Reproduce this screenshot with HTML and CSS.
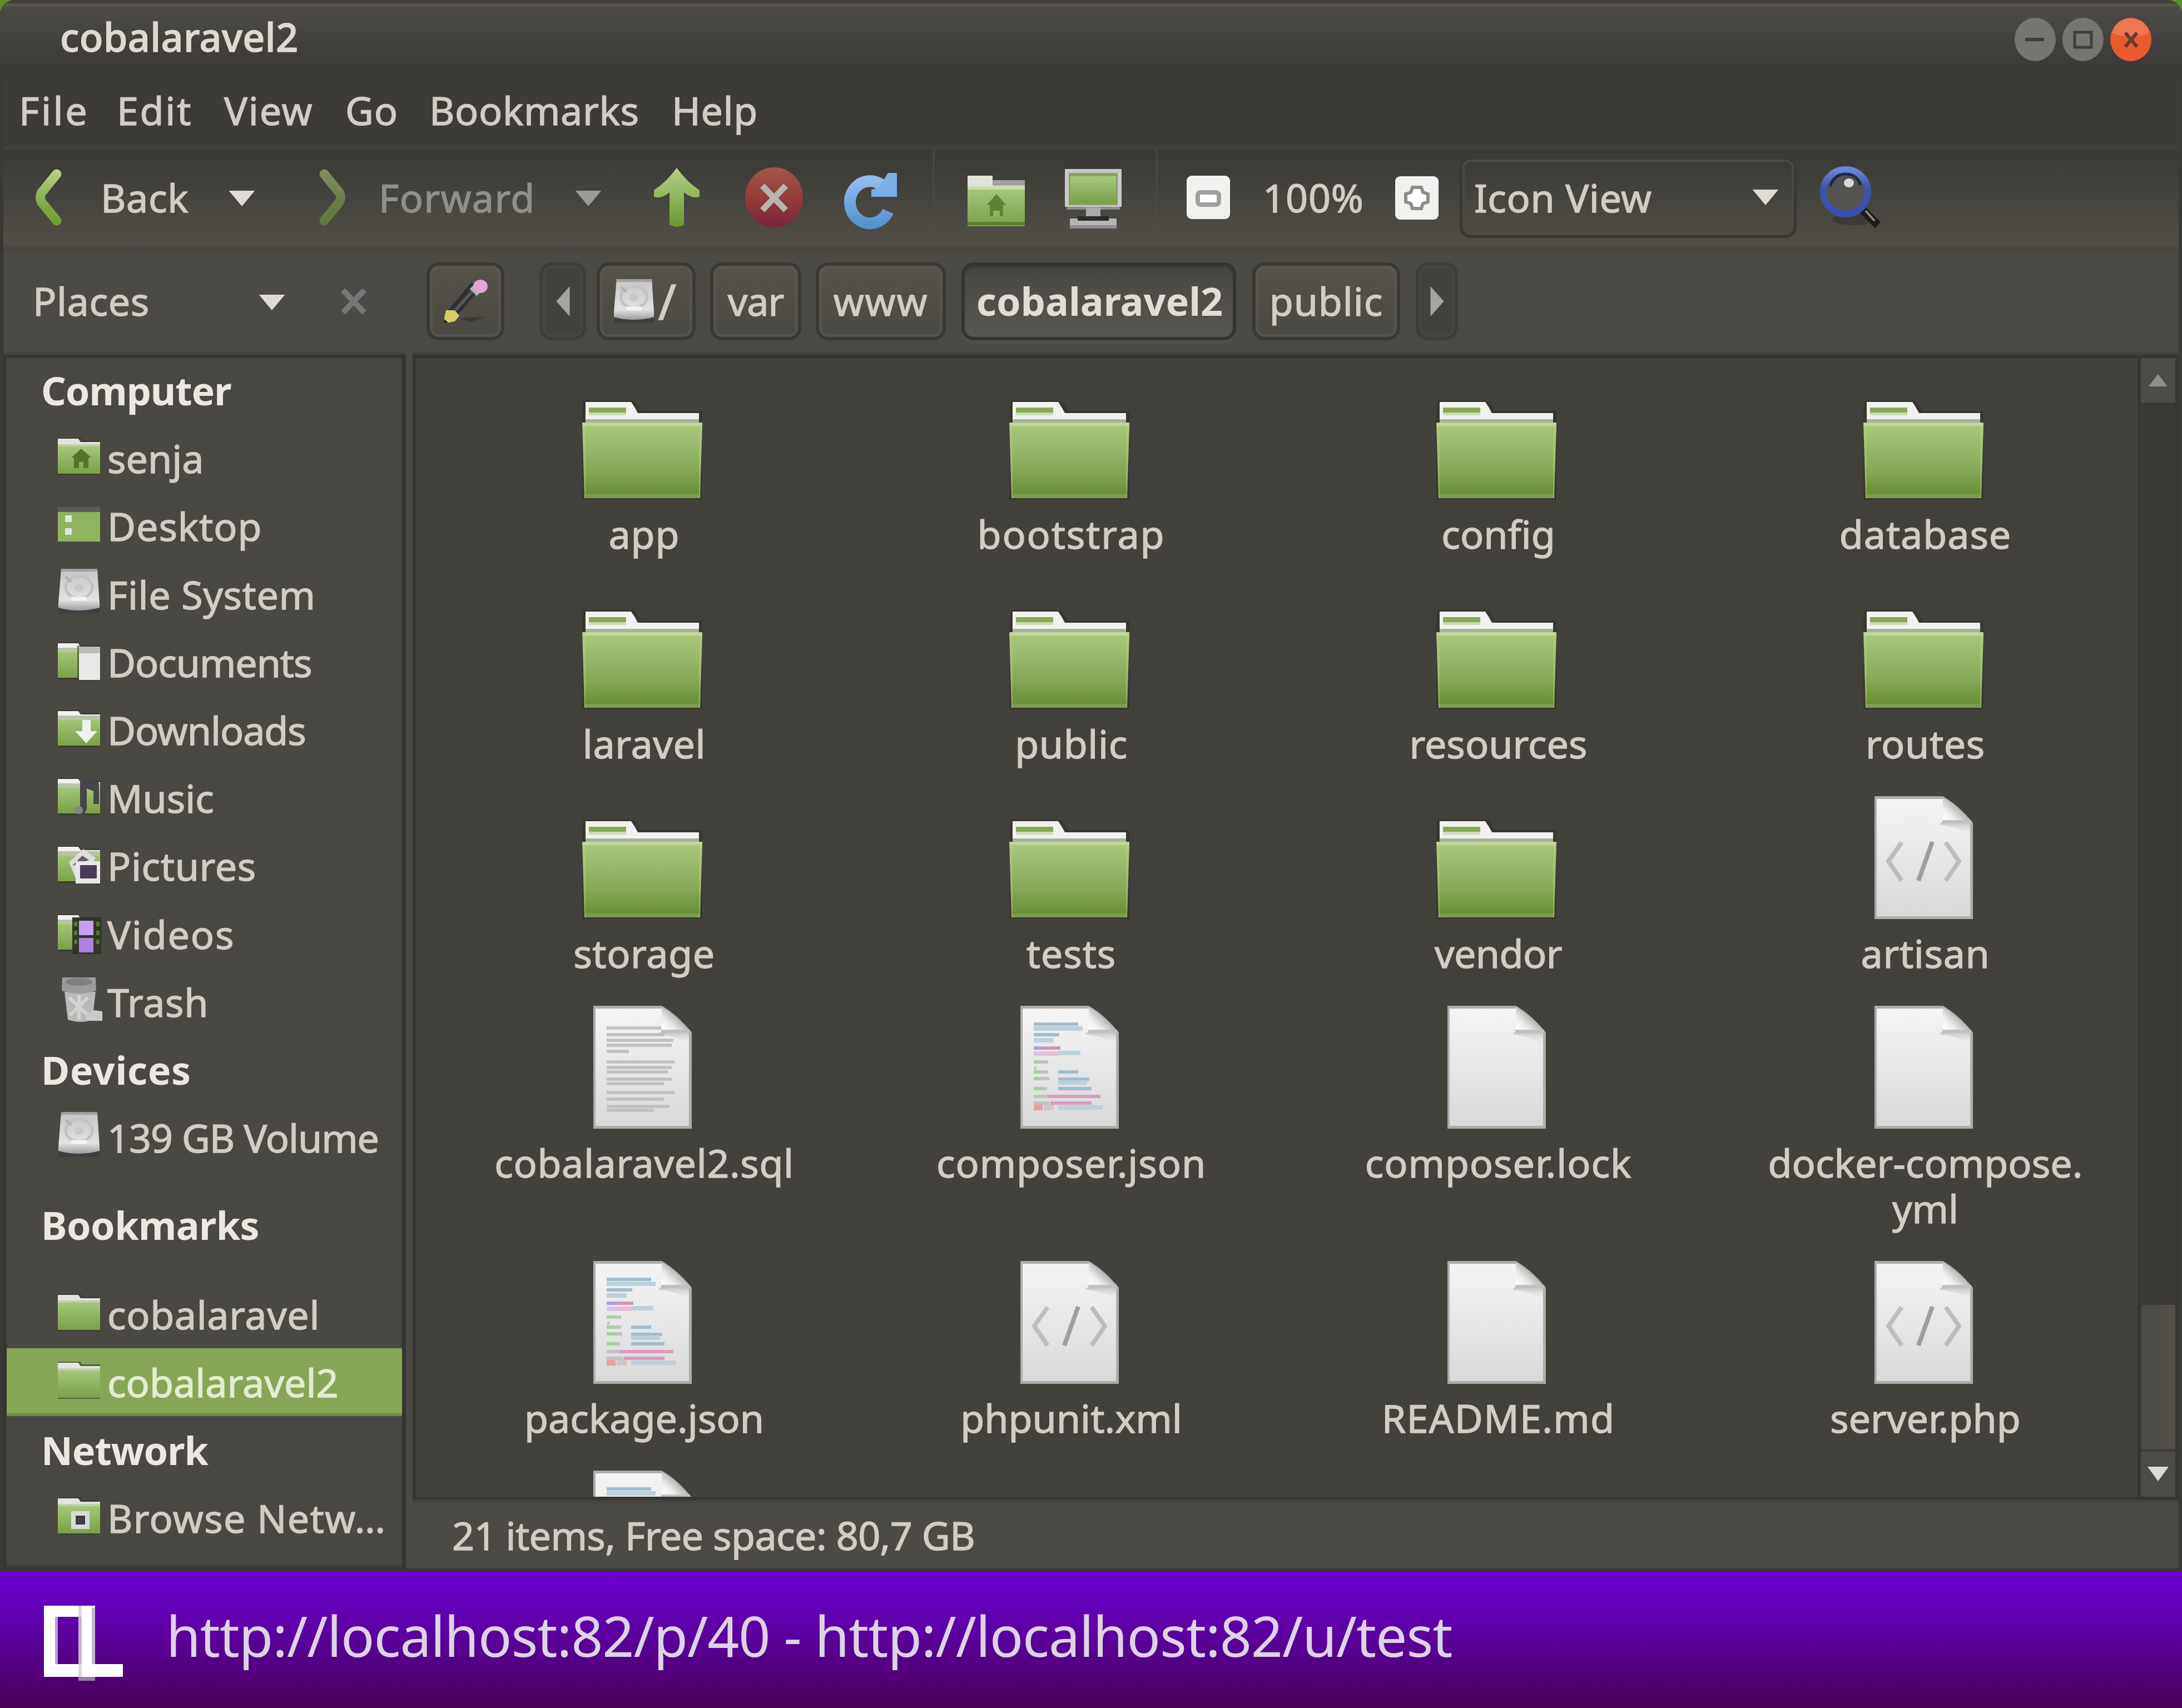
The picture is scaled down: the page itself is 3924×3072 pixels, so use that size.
FILE: index.html
```html
<!DOCTYPE html>
<html lang="en">
<head>
<meta charset="utf-8">
<title>cobalaravel2</title>
<link rel="stylesheet" href="styles.css">
</head>
<body>
<svg class="defs" width="0" height="0" aria-hidden="true">
  <defs>
    <linearGradient id="gFolder" x1="0" y1="0" x2="0" y2="1"><stop offset="0" stop-color="#abc97e"/><stop offset=".6" stop-color="#89aa5a"/><stop offset=".93" stop-color="#6c9037"/><stop offset="1" stop-color="#6c9037"/></linearGradient>
    <linearGradient id="gSmall" x1="0" y1="0" x2="0" y2="1"><stop offset="0" stop-color="#a8c97c"/><stop offset="1" stop-color="#7ba04a"/></linearGradient>
    <linearGradient id="gDoc" x1="0" y1="0" x2="0" y2="1"><stop offset="0" stop-color="#f4f4f4"/><stop offset="1" stop-color="#d9d9d9"/></linearGradient>
    <linearGradient id="gFold" gradientUnits="userSpaceOnUse" x1="124" y1="44" x2="148" y2="20"><stop offset="0" stop-color="#ffffff"/><stop offset=".5" stop-color="#ececec"/><stop offset="1" stop-color="#b9b9b9"/></linearGradient>
    <linearGradient id="gShade" x1="0" y1="0" x2="0" y2="1"><stop offset="0" stop-color="#c6c6c6"/><stop offset="1" stop-color="#e8e8e8" stop-opacity="0"/></linearGradient>
    <linearGradient id="gArrow" x1="0" y1="0" x2="0" y2="1"><stop offset="0" stop-color="#b4cf86"/><stop offset=".5" stop-color="#8fb65b"/><stop offset="1" stop-color="#6b9433"/></linearGradient>
    <linearGradient id="gChev" gradientUnits="userSpaceOnUse" x1="0" y1="0" x2="0" y2="100"><stop offset="0" stop-color="#bccf8a"/><stop offset=".6" stop-color="#82ab4a"/><stop offset="1" stop-color="#6f9d33"/></linearGradient>
    <linearGradient id="gStop" x1="0" y1="0" x2="0" y2="1"><stop offset="0" stop-color="#a0564b"/><stop offset=".5" stop-color="#953c39"/><stop offset="1" stop-color="#7b2440"/></linearGradient>
    <linearGradient id="gBlue" x1="0" y1="0" x2="0" y2="1"><stop offset="0" stop-color="#8fbcec"/><stop offset="1" stop-color="#5793d0"/></linearGradient>
    <linearGradient id="gDrive" x1="0" y1="0" x2="0" y2="1"><stop offset="0" stop-color="#c4c4c4"/><stop offset=".75" stop-color="#e2e2e2"/><stop offset="1" stop-color="#9b9b9b"/></linearGradient>
    <linearGradient id="gLens" x1="0" y1="0" x2="0" y2="1"><stop offset="0" stop-color="#6d85d6"/><stop offset=".4" stop-color="#3d55a8"/><stop offset="1" stop-color="#3a4fae"/></linearGradient>

    <symbol id="folder" viewBox="0 0 216 221">
      <path d="M2 42H93l14 19h109v164H0V60z" fill="#35332e" opacity=".7"/>
      <path d="M6 45H88l6 9 6 11h110v30H6z" fill="#f1f1ef"/>
      <path d="M12 55h67v13H12z" fill="#87a857"/><path d="M12 64h67v5H12z" fill="#cdd9b8"/>
      <path d="M6 76h204v6H6z" fill="#a9b29b"/>
      <path d="M0 82h216v7l-4 129H4z" fill="url(#gFolder)"/>
      <path d="M1 82h214v6H1z" fill="#c0d69c"/><path d="M4 211h208v7H4z" fill="#7c9b55"/>
      <path d="M1 88h5v130H4zM210 88h5l-3 130h-2z" fill="#b8d28c" opacity=".4"/>
    </symbol>
    <symbol id="doc" viewBox="0 0 177 221">
      <path d="M0 0h123q28 16 54 48v173H0z" fill="#adadab"/>
      <path d="M4 5h119l49 45v166H4z" fill="url(#gDoc)"/>
      <path d="M118 48h54v22q-22-16-54-18z" fill="url(#gShade)"/>
      <path d="M123 2q26 16 49 42h-49z" fill="url(#gFold)"/>
      <path d="M122 43h52v6h-52z" fill="#c0c0c0"/>
    </symbol>
    <symbol id="sheet" viewBox="0 0 177 221">
      <use href="#doc"/>
      <path d="M24 40h98M24 52h104M24 62h120M24 71h117M24 82h40M24 101h122M24 111h117M24 119h110M24 132h117M24 140h103M24 156h122M24 168h103M24 181h113M24 188h85" stroke="#c0c0c0" stroke-width="5.5"/>
    </symbol>
    <symbol id="code" viewBox="0 0 177 221">
      <use href="#doc"/>
      <g stroke-width="6" fill="none">
        <path d="M24 33h80M24 52h46M68 119h36M68 132h56M68 149h60" stroke="#9fbed0"/>
        <path d="M24 41h88M24 62h36M68 85h40M68 138h52M68 183h80" stroke="#bdd0dc" stroke-width="8"/>
        <path d="M24 76h20" stroke="#b59bdb"/><path d="M44 76h28" stroke="#d695b8"/>
        <path d="M24 86h18" stroke="#d8c6e8" stroke-width="8"/><path d="M42 86h26" stroke="#e6bfd2" stroke-width="8"/>
        <path d="M24 101h14M24 119h14M24 131h14M24 149h14" stroke="#9fd596"/>
        <path d="M38 101h12M25 112h4M38 119h12M38 131h14M38 149h10M24 163h24M24 175h28" stroke="#c2c2c2"/>
        <path d="M48 163h96M54 175h74" stroke="#dc9cbf"/>
        <path d="M24 183h16" stroke="#e8a2a0" stroke-width="10"/><path d="M42 183h18" stroke="#cfc7c5" stroke-width="10"/>
      </g>
    </symbol>
    <symbol id="markup" viewBox="0 0 177 221">
      <use href="#doc"/>
      <path d="M49 83L25 117l24 35M128 83l24 34-24 35" stroke="#bdbdbd" stroke-width="8" fill="none" stroke-linejoin="round"/>
      <path d="M104 82L79 152" stroke="#9e9e9e" stroke-width="8"/>
    </symbol>
    <symbol id="mini" viewBox="0 0 76 76">
      <path d="M0 1h40l4 5h34v62H-1z" fill="#35362c" opacity=".6"/>
      <path d="M0 3h37l4 6h35v14H0z" fill="#e3e3e2"/>
      <path d="M0 13h76v53H0z" fill="url(#gSmall)"/><path d="M0 13h76v4H0z" fill="#bfcfa9"/>
    </symbol>
    <symbol id="miniWhite" viewBox="0 0 76 76">
      <path d="M0 2h38l4 5h35v62H-1z" fill="#35362c" opacity=".6"/>
      <path d="M0 4h37l4 6h35v14H0z" fill="#f1f1f0"/>
      <path d="M0 14h76v52H0z" fill="url(#gSmall)"/><path d="M0 12h76v8H0z" fill="#b9c3a9"/>
    </symbol>
    <symbol id="drive" viewBox="0 0 76 82">
      <path d="M1 69h74v12H1z" fill="#3f3f40"/>
      <path d="M6 0h65l4 62v8q-38 10-74 0v-8z" fill="url(#gDrive)"/>
      <path d="M6 0h65v5H6z" fill="#a0a0a0"/>
      <ellipse cx="38" cy="33" rx="24" ry="20" fill="none" stroke="#c3c3c3" stroke-width="5"/>
      <ellipse cx="38" cy="34" rx="9" ry="7" fill="#c9c9c9"/><path d="M14 14l10 10" stroke="#b3b3b3" stroke-width="5"/>
      <path d="M24 54h28" stroke="#f3f3f3" stroke-width="7"/>
    </symbol>
    <symbol id="down" viewBox="0 0 50 30"><path d="M0 0h50L25 30z" fill="currentColor"/></symbol>
  </defs>
</svg>

<main class="window">
  <header class="titlebar">
    <h1 class="title">cobalaravel2</h1>
    <div class="controls">
      <svg class="ctl" viewBox="0 0 76 80"><ellipse cx="38" cy="40" rx="37" ry="39" class="ctl-gray"/><path d="M20 40h34" stroke="#3f3e3a" stroke-width="6"/></svg>
      <svg class="ctl" viewBox="0 0 76 80"><ellipse cx="38" cy="40" rx="37" ry="39" class="ctl-gray"/><rect x="23" y="27" width="30" height="27" fill="none" stroke="#3f3e3a" stroke-width="5"/></svg>
      <svg class="ctl" viewBox="0 0 76 80"><ellipse cx="38" cy="40" rx="37" ry="39" fill="#e95b2f"/><path d="M4 28q10-26 34-26t34 26q-34 14-68 0z" fill="#f2886b" opacity=".6"/><path d="M28 28l21 25M49 28L28 53" stroke="#6b3a2a" stroke-width="6"/></svg>
    </div>
  </header>

  <nav class="menubar">
    <span class="m-file ls-4">File</span><span class="m-edit ls-3">Edit</span><span class="m-view ls-2">View</span><span class="m-go ls-1">Go</span><span class="m-book">Bookmarks</span><span class="m-help">Help</span>
  </nav>

  <div class="toolbar">
    <div class="group nav">
      <svg class="chev" viewBox="0 0 50 100"><path d="M41 8L14 41q-5 9 0 18l27 33" class="chev-line"/></svg>
      <span class="t-back">Back</span>
      <svg class="dd dd-back" viewBox="0 0 50 30"><use href="#down"/></svg>
      <svg class="chev chev-fwd" viewBox="0 0 50 100"><path d="M9 8l27 33q5 9 0 18L9 92" class="chev-line"/></svg>
      <span class="t-fwd ls-15">Forward</span>
      <svg class="dd dd-fwd" viewBox="0 0 50 30"><use href="#down"/></svg>
      <svg class="up" viewBox="0 0 86 110"><path d="M43 2Q62 28 84 42v12q-14 4-28-8v58q-13 8-26 0V46Q16 58 2 54V42Q24 28 43 2z" fill="url(#gArrow)"/></svg>
      <svg class="stop" viewBox="0 0 106 110"><ellipse cx="53" cy="55" rx="52" ry="54" fill="url(#gStop)"/><path d="M32 34l42 44M74 34L32 78" stroke="#b9b4b0" stroke-width="11"/></svg>
      <svg class="reload" viewBox="0 0 98 98"><path d="M74 28A36 38 0 1 0 80 70" fill="none" stroke="url(#gBlue)" stroke-width="21"/><path d="M96 1v43H50V31l14-4 16-26z" fill="#79aee6"/></svg>
    </div>
    <div class="group places-btns">
      <svg class="homef" viewBox="0 0 103 98"><path d="M0 5h45v12h58v14H0z" fill="#e0e3da"/><path d="M45 13h58v10H45z" fill="#a3a1a4"/><path d="M0 24h103v72H0z" fill="url(#gSmall)"/><path d="M0 24h103v6H0z" fill="#c9dbaf"/><path d="M0 88h103v6H0z" fill="#5d7d31"/><path d="M52 38l18 20h-6v20H40V58h-6z" fill="#5f8334"/><path d="M46 68h12v11H46z" fill="#8fb45f"/></svg>
      <svg class="comp" viewBox="0 0 104 112"><path d="M1 3h102v68H1z" fill="#c9c9c9"/><path d="M8 10h88v58H8z" fill="#87a25c"/><path d="M11 16h82v48H11z" fill="url(#gSmall)"/><path d="M4 71h96v5H4z" fill="#8b8b8d"/><path d="M39 72h26v24H39z" fill="#a9a9a9"/><path d="M10 92h84v18H10z" fill="#b5b5b5"/><path d="M24 88h56v8H24z" fill="#2b2a28"/><path d="M10 104h84v6H10z" fill="#8e8e8e"/></svg>
    </div>
    <div class="group zoom">
      <svg class="zbtn" viewBox="0 0 80 80"><rect x="1" y="1" width="78" height="78" rx="9" fill="#f1f1f0"/><rect x="21" y="31" width="38" height="22" rx="5" fill="#fff" stroke="#a0a09d" stroke-width="8"/></svg>
      <span class="t-zoom ls-1">100%</span>
      <svg class="zbtn zplus" viewBox="0 0 80 80"><rect x="1" y="1" width="78" height="78" rx="9" fill="#f1f1f0"/><path d="M32 21h16l3 9 9 3v14l-9 3-3 9H32l-3-9-9-3V33l9-3z" fill="#fff" stroke="#8d8d89" stroke-width="6"/></svg>
      <div class="combo"><span>Icon View</span><svg class="dd" viewBox="0 0 50 30"><use href="#down"/></svg></div>
      <svg class="lens" viewBox="0 0 108 112"><ellipse cx="60" cy="96" rx="38" ry="10" fill="#33322e" opacity=".6"/><path d="M74 76L104 106" stroke="#1d1c1a" stroke-width="15"/><path d="M82 80l16 18" stroke="#8b8783" stroke-width="4"/><circle cx="46" cy="46" r="40" fill="#5b5a55" fill-opacity=".75" stroke="url(#gLens)" stroke-width="12"/><path d="M18 36Q26 14 46 14t27 20" stroke="#20284e" stroke-width="5" fill="none"/><ellipse cx="52" cy="30" rx="9" ry="8" fill="#d8d8d6"/></svg>
    </div>
  </div>

  <div class="locbar">
    <div class="places-head">
      <span>Places</span>
      <svg class="dd" viewBox="0 0 50 30"><use href="#down"/></svg>
      <svg class="x" viewBox="0 0 52 54"><path d="M7 7l38 40M45 7L7 47" stroke="#77767a" stroke-width="10"/></svg>
    </div>
    <div class="path">
      <div class="btn b-edit"><svg viewBox="0 0 80 80"><path d="M30 70l44-2-26 10z" fill="#3c3a35"/><path d="M16 62L58 12" stroke="#303030" stroke-width="19"/><path d="M22 56L54 20" stroke="#56565a" stroke-width="6"/><path d="M54 24l8-8" stroke="#b3b0b4" stroke-width="18"/><ellipse cx="67" cy="13" rx="13" ry="12" fill="#e3a5da"/><path d="M0 80L5 56h16l8 10-8 10z" fill="#d8cc68"/><path d="M0 80l2-8 7 6z" fill="#28241a"/></svg></div>
      <div class="btn flat b-left"><svg viewBox="0 0 24 54"><path d="M24 0v54L0 27z" fill="#a5a4a2"/></svg></div>
      <div class="btn b-root"><svg viewBox="0 0 76 82"><use href="#drive"/></svg><span>/</span></div>
      <div class="btn b-var ls-n1"><span>var</span></div>
      <div class="btn b-www ls-2"><span>www</span></div>
      <div class="btn b-cur"><span>cobalaravel2</span></div>
      <div class="btn b-public ls-1"><span>public</span></div>
      <div class="btn flat b-right"><svg viewBox="0 0 24 54"><path d="M0 0v54l24-27z" fill="#a5a4a2"/></svg></div>
    </div>
  </div>

  <div class="body">
    <aside class="sidebar">
      <h2 class="ls-n1">Computer</h2>
      <div class="row"><svg viewBox="0 0 76 76"><use href="#mini"/><path d="M42 21l18 16h-5v19h-9V45h-8v11h-9V37h-5z" fill="#54742c"/></svg><span class="ls-0">senja</span></div>
      <div class="row"><svg viewBox="0 0 76 76"><path d="M0 4h76v10H0z" fill="#5c5c55"/><path d="M0 13h76v53H0z" fill="#8fb35f"/><path d="M13 19h12v12H13zM13 42h12v12H13z" fill="#e2e7da"/></svg><span class="ls-1">Desktop</span></div>
      <div class="row"><svg class="disk" viewBox="0 0 76 82"><use href="#drive"/></svg><span>File System</span></div>
      <div class="row"><svg viewBox="0 0 76 76"><use href="#miniWhite"/><path d="M35 8h42v64H35z" fill="#35362c" opacity=".6"/><path d="M38 10h38v60H38z" fill="#e8e8e7"/><path d="M38 10h38v12H38z" fill="#bcbdb6"/></svg><span class="ls-n1">Documents</span></div>
      <div class="row"><svg viewBox="0 0 76 76"><use href="#miniWhite"/><path d="M44 20h15v20h12L51 62 31 40h13z" fill="#f0f0ee"/></svg><span class="ls-n1">Downloads</span></div>
      <div class="row"><svg viewBox="0 0 76 76"><use href="#miniWhite"/><path d="M40 3h12l22 8v38h-10V26l-12-5v37q-4 14-16 12-8-8 4-16z" fill="#45464a"/><circle cx="38" cy="60" r="7" fill="#85858a"/></svg><span class="ls-0">Music</span></div>
      <div class="row"><svg viewBox="0 0 76 76"><use href="#miniWhite"/><path d="M20 32L46 8l22 16-16 30-20 6z" fill="#dedddb"/><path d="M26 38l18-18 12 8z" fill="#6a5a70"/><path d="M32 30h44v40H32z" fill="#e9e8e8"/><path d="M40 37h30v24H40z" fill="#4b3a55"/></svg><span>Pictures</span></div>
      <div class="row"><svg viewBox="0 0 76 76"><use href="#miniWhite"/><path d="M26 8h52v66H26z" fill="#303728"/><path d="M38 14h26v26H38z" fill="#c6a0f0"/><path d="M38 45h26v26H38z" fill="#af80dd"/><path d="M29 16h6v8h-6zm0 16h6v8h-6zm0 16h6v8h-6zM69 16h6v8h-6zm0 16h6v8h-6zm0 16h6v8h-6z" fill="#567a31"/></svg><span class="ls-2">Videos</span></div>
      <div class="row"><svg viewBox="0 0 76 76"><path d="M12 20h56l-6 50q-20 8-44 0z" fill="#b9bab9"/><path d="M20 30l34 32M54 30L22 62M38 26v44" stroke="#d3d3d2" stroke-width="6"/><path d="M8 -6h60l1 24q-30 10-62 0z" fill="#9a9b9d"/><ellipse cx="38" cy="2" rx="24" ry="7" fill="#7f8082"/><path d="M50 62l14-9 16 2v17H52z" fill="#c9cac8"/></svg><span>Trash</span></div>
      <h2>Devices</h2>
      <div class="row"><svg class="disk" viewBox="0 0 76 82"><use href="#drive"/></svg><span class="ls-n1">139 GB Volume</span></div>
      <h2 class="h-book ls-n0">Bookmarks</h2>
      <div class="row"><svg viewBox="0 0 76 76"><use href="#mini"/></svg><span>cobalaravel</span></div>
      <div class="row selected"><svg viewBox="0 0 76 76"><use href="#mini"/></svg><span class="ls-0">cobalaravel2</span></div>
      <h2 class="ls-n1">Network</h2>
      <div class="row"><svg viewBox="0 0 76 76"><use href="#mini"/><path d="M24 26h33v32H24z" fill="#d8dcd4"/><path d="M32 34h17v16H32z" fill="#3e4143"/></svg><span class="ls-15">Browse Netw…</span></div>
    </aside>

    <section class="content">
      <div class="view">
        <div class="files">
          <div class="file"><svg class="fold"><use href="#folder"/></svg><span class="ls-1">app</span></div>
          <div class="file"><svg class="fold"><use href="#folder"/></svg><span class="ls-2">bootstrap</span></div>
          <div class="file"><svg class="fold"><use href="#folder"/></svg><span class="ls-0">config</span></div>
          <div class="file"><svg class="fold"><use href="#folder"/></svg><span class="ls-1">database</span></div>
          <div class="file"><svg class="fold"><use href="#folder"/></svg><span>laravel</span></div>
          <div class="file"><svg class="fold"><use href="#folder"/></svg><span>public</span></div>
          <div class="file"><svg class="fold"><use href="#folder"/></svg><span class="ls-0">resources</span></div>
          <div class="file"><svg class="fold"><use href="#folder"/></svg><span>routes</span></div>
          <div class="file"><svg class="fold"><use href="#folder"/></svg><span>storage</span></div>
          <div class="file"><svg class="fold"><use href="#folder"/></svg><span class="ls-1">tests</span></div>
          <div class="file"><svg class="fold"><use href="#folder"/></svg><span class="ls-n0">vendor</span></div>
          <div class="file"><svg><use href="#markup"/></svg><span>artisan</span></div>
          <div class="file"><svg><use href="#sheet"/></svg><span>cobalaravel2.sql</span></div>
          <div class="file"><svg><use href="#code"/></svg><span class="ls-1">composer.json</span></div>
          <div class="file"><svg><use href="#doc"/></svg><span class="ls-1">composer.lock</span></div>
          <div class="file"><svg><use href="#doc"/></svg><span class="ls-0">docker-compose.<br>yml</span></div>
          <div class="file"><svg><use href="#code"/></svg><span class="ls-0">package.json</span></div>
          <div class="file"><svg><use href="#markup"/></svg><span class="ls-0">phpunit.xml</span></div>
          <div class="file"><svg><use href="#doc"/></svg><span class="ls-15">README.md</span></div>
          <div class="file"><svg><use href="#markup"/></svg><span class="ls-0">server.php</span></div>
          <div class="file"><svg><use href="#code"/></svg></div>
        </div>
        <div class="scrollbar">
          <div class="sb-up"><svg viewBox="0 0 34 22"><path d="M0 22h34L17 0z" fill="#8f8e8b"/></svg></div>
          <div class="sb-track"><div class="sb-thumb"></div></div>
          <div class="sb-down"><svg viewBox="0 0 38 26"><path d="M0 0h38L19 26z" fill="#dddcd9"/></svg></div>
        </div>
      </div>
      <footer class="status ls-n0">21 items, Free space: 80,7 GB</footer>
    </section>
  </div>
</main>

<footer class="caption">
  <svg class="logo" viewBox="0 0 142 136"><path d="M0 0h92v20H20v85h42V20h30v85h50v23H0z" fill="#fff"/><path d="M62 20h6v85h-6zM86 4h6v101h-6z" fill="#c3b6d2"/><path d="M20 20h5v85h-5z" fill="#b9a3cf"/><path d="M62 0h6v20h-6zM62 105h6v23h-6z" fill="#dcd6e4"/><path d="M62 128h30v7H62z" fill="#9580a6"/></svg>
  <span>http://localhost:82/p/40 - http://localhost:82/u/test</span>
</footer>
</body>
</html>
```
FILE: styles.css
```css
* { box-sizing: border-box; }
body {
  margin: 0;
  width: 3924px;
  height: 3072px;
  overflow: hidden;
  background: #5f8f2d;
  color: #d1cdc5;
  font: 400 70px/82px "Noto Sans", "Open Sans", sans-serif;
  letter-spacing: 0.6px;
  white-space: nowrap;
}
svg { display: block; flex: none; overflow: visible; }
.defs { position: absolute; }
h1, h2 { margin: 0; font-size: inherit; }

.ls-n1 { letter-spacing: -1.1px; }
.ls-n0 { letter-spacing: -0.6px; }
.ls-0 { letter-spacing: 0; }
.ls-1 { letter-spacing: 0.9px; }
.ls-15 { letter-spacing: 1.3px; }
.ls-2 { letter-spacing: 1.8px; }
.ls-3 { letter-spacing: 2.7px; }
.ls-4 { letter-spacing: 3.6px; }

.window {
  height: 2827px;
  display: flex;
  flex-direction: column;
  padding: 0 6px 6px;
  background: #3a3935;
  border-radius: 26px 26px 0 0;
  overflow: hidden;
  -webkit-text-stroke: 1.3px currentColor;
}

.titlebar {
  height: 132px;
  margin: 0 -6px;
  padding: 0 54px 0 108px;
  display: flex;
  justify-content: space-between;
  align-items: center;
  background: linear-gradient(#42413c 0 6px, #58554d 6px 12px, #4c4b46 12px, #3c3b37 112px);
}
.title { font-weight: 500; color: #dfdad0; letter-spacing: 0.4px; }
.controls { display: flex; gap: 10px; padding-top: 9px; }
.ctl { width: 76px; height: 80px; }
.ctl-gray { fill: #76756f; }

.menubar {
  height: 137px;
  display: flex;
  align-items: center;
  background: #3c3b37;
  border-bottom: 5px solid #403f3a;
}
.menubar span { flex: none; }
.m-file { width: 176px; margin-left: 28px; }
.m-edit { width: 193px; }
.m-view { width: 218px; }
.m-go { width: 151px; }
.m-book { width: 436px; }

.toolbar {
  height: 172px;
  display: flex;
  background: linear-gradient(#393834, #45443e 50%, #524f47);
}
.group { display: flex; align-items: center; }
.nav { width: 1671px; }
.places-btns { width: 401px; border-left: 4px solid rgba(80, 78, 70, .55); }
.zoom { border-left: 4px solid rgba(80, 78, 70, .55); }
.chev { width: 50px; height: 100px; margin-left: 55px; }
.chev-line { fill: none; stroke: url(#gChev); stroke-width: 17; stroke-linecap: round; }
.chev-fwd { margin-left: 114px; opacity: .55; }
.t-back { margin-left: 70px; width: 164px; }
.dd { width: 50px; height: 28px; color: #dedbd4; }
.dd-back { margin-left: 65px; }
.t-fwd { margin-left: 57px; width: 285px; color: #918f8a; }
.dd-fwd { margin-left: 67px; color: #9d9b98; }
.dd-fwd, .dd-back { margin-top: 4px; }
.up { width: 86px; height: 110px; margin-left: 91px; }
.stop { width: 106px; height: 110px; margin-left: 79px; }
.reload { width: 98px; height: 98px; margin-left: 72px; margin-top: 8px; }
.homef { width: 103px; height: 98px; margin-left: 59px; margin-top: 10px; }
.comp { width: 104px; height: 112px; margin-left: 71px; margin-top: 4px; }
.zbtn { width: 80px; height: 80px; margin-left: 51px; }
.t-zoom { margin-left: 58px; width: 176px; }
.zplus { margin-left: 61px; margin-top: 1px; }
.combo {
  width: 606px;
  height: 146px;
  margin-left: 37px;
  padding: 0 26px 0 21px;
  display: flex;
  align-items: center;
  justify-content: space-between;
  border: 5px solid #3a3934;
  border-radius: 20px;
  box-shadow: inset 0 0 0 4px #4b4a44;
}
.lens { width: 108px; height: 112px; margin-left: 42px; }

.locbar {
  height: 191px;
  display: flex;
  align-items: center;
  padding-top: 5px;
  background: #4c4a44;
  border-top: 6px solid #4a4943;
  box-shadow: inset 0 6px #474640;
}
.places-head { width: 761px; display: flex; align-items: center; padding-left: 53px; }
.places-head span { width: 405px; margin-top: -2px; }
.places-head .dd { margin-top: 4px; }
.x { width: 52px; height: 54px; margin-left: 96px; }
.path { display: flex; }
.btn {
  height: 140px;
  display: flex;
  align-items: center;
  justify-content: center;
  border: 6px solid #3b3a35;
  border-radius: 22px;
  background: linear-gradient(#555249, #4a4943);
  box-shadow: inset 0 0 0 5px rgba(92, 91, 83, .55);
}
.btn span { margin-top: -3px; }
.flat { background: #43423e; border-color: #3f3e3a; box-shadow: inset 0 0 0 4px #484743; }
.flat svg { width: 25px; height: 54px; }
.b-edit { width: 140px; }
.b-edit svg { width: 80px; height: 80px; }
.b-left { width: 84px; margin-left: 63px; }
.b-root { width: 178px; margin-left: 19px; gap: 5px; }
.b-root svg { width: 78px; height: 80px; }
.b-root span { width: 40px; font-size: 88px; }
.b-var { width: 164px; margin-left: 26px; }
.b-www { width: 234px; margin-left: 26px; }
.b-cur {
  width: 494px;
  margin-left: 28px;
  font-weight: 700;
  letter-spacing: 0;
  color: #e2ddd4;
  -webkit-text-stroke: 0;
  background: linear-gradient(#46453f, #4b4a45 20%, #575650);
  border-color: #363530;
  box-shadow: 0 6px #504f49, inset 0 5px #3f3e39;
}
.b-cur span { padding-left: 3px; }
.b-public { width: 266px; margin-left: 29px; }
.b-right { width: 76px; margin-left: 28px; }

.body { flex: 1; min-height: 0; display: flex; background: #4c4a44; }
.sidebar {
  width: 724px;
  padding: 3px 7px 0 6px;
  background: #4a4842;
  border-top: 6px solid #45433e;
  box-shadow: inset 6px 6px #363531, inset -7px 0 #363531, inset 0 -6px #3e3d38;
}
.sidebar h2 { height: 122.2px; line-height: 122.2px; padding-left: 62px; font-weight: 700; color: #ebe8e2; -webkit-text-stroke: 0; }
.row { height: 122.2px; padding-left: 92px; display: flex; align-items: center; gap: 13px; }
.row svg { width: 76px; height: 76px; }
.row .disk { height: 82px; margin-top: -10px; }
.sidebar .h-book { margin: 35px 0 38px; }
.selected { background: #86a655; color: #e4ebd0; box-shadow: inset 0 -5px #71884d; }

.content { flex: 1; display: flex; flex-direction: column; margin-left: 12px; border-top: 6px solid #45433e; }
.view {
  height: 2060px;
  flex: none;
  display: flex;
  overflow: hidden;
  background: #43413b;
  border: solid #383632;
  border-width: 6px 0 6px 6px;
}
.files {
  width: 3096px;
  padding: 34px 0 0 23px;
  display: grid;
  grid-template-columns: repeat(4, 768px);
  align-content: start;
}
.file { display: flex; flex-direction: column; align-items: center; gap: 21px; padding-bottom: 53px; text-align: center; }
.file svg { width: 177px; height: 221px; }
.file .fold { width: 216px; }
.file span { padding-left: 7px; margin-top: -1px; margin-bottom: 1px; }
.scrollbar {
  width: 74px;
  display: flex;
  flex-direction: column;
  background: #3c3a36;
  border: solid #383632;
  border-width: 0 6px;
}
.sb-up, .sb-down { display: flex; justify-content: center; align-items: center; background: #4d4c46; }
.sb-up { height: 80px; }
.sb-up svg { width: 34px; height: 22px; }
.sb-down { height: 81px; padding-bottom: 1px; }
.sb-down svg { width: 38px; height: 26px; }
.sb-track { flex: 1; display: flex; align-items: flex-end; border-bottom: 5px solid #403f3a; }
.sb-thumb { width: 62px; height: 259px; background: linear-gradient(90deg, #4b4a44, #53514a); }
.status {
  flex: 1;
  display: flex;
  align-items: center;
  padding-left: 71px;
  padding-bottom: 4px;
  border-top: 6px solid #46443f;
}

.caption {
  height: 245px;
  display: flex;
  align-items: flex-start;
  padding: 61px 0 0 79px;
  background: linear-gradient(#6c00d2, #6300b6 28%, #57008c 60%, #4d0058);
  color: #ddd3e4;
}
.logo { width: 142px; height: 136px; }
.caption span { margin: 3px 0 0 78px; font-size: 100px; line-height: 100px; letter-spacing: -1.05px; }
```
